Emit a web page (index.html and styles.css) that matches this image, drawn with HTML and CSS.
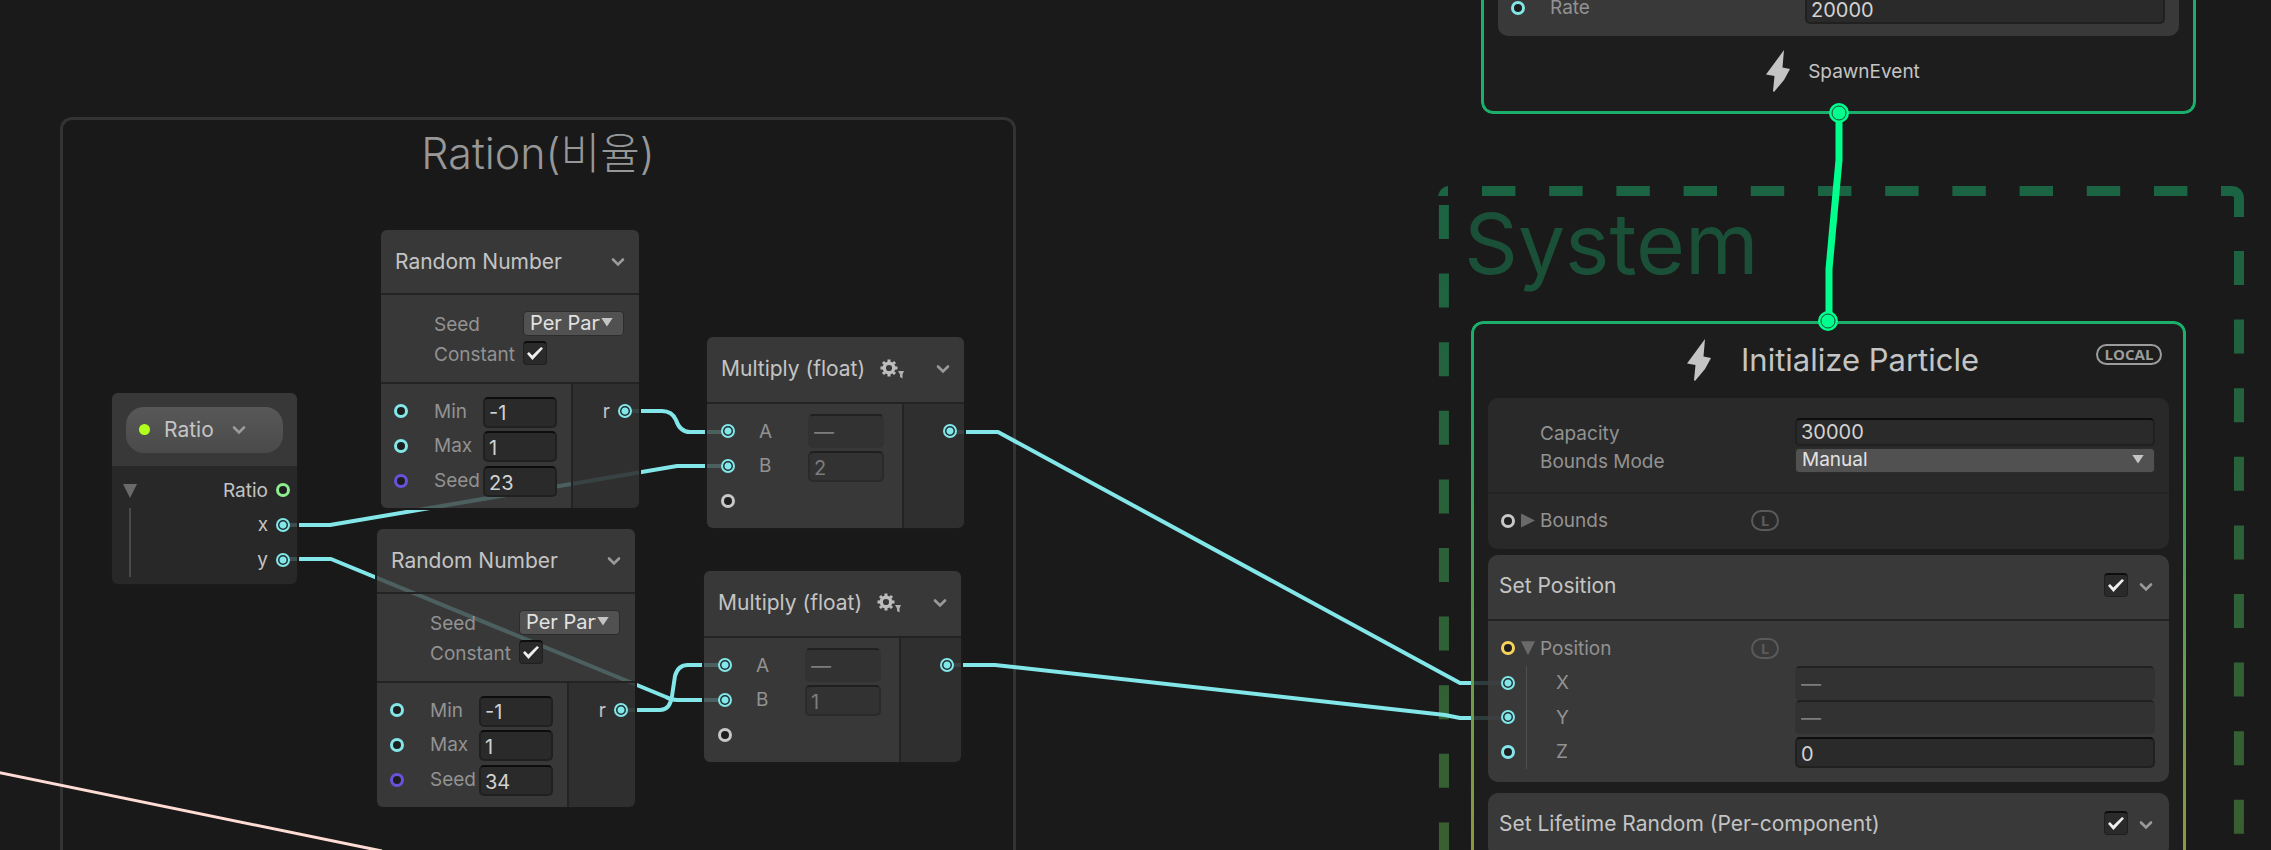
FILE: index.html
```html
<!DOCTYPE html>
<html lang="ko">
<head>
    <meta charset="UTF-8">
    <meta name="viewport" content="width=device-width, initial-scale=1.0">
    <title>VFX Graph</title>
    <link rel="stylesheet" href="styles.css">
</head>
<body>
    <svg class="symbols" aria-hidden="true">
        <symbol id="chevron" viewBox="0 0 14 10"><path d="M2 2.500L7 7.500L12 2.500" fill="none" stroke="#9a9a9a" stroke-width="2.600" stroke-linecap="round" /></symbol>
        <symbol id="bolt" viewBox="0 0 24 42"><path d="M18 0L16.500 17.500L24 19L18 30L8 42L7 41L8.500 26L0 24.500Z" fill="#c4c4c4" /></symbol>
        <symbol id="gear" viewBox="0 0 26 20">
            <circle cx="9" cy="9" r="4.800" fill="none" stroke="#bdbdbd" stroke-width="3.400" />
            <path d="M9 0.500V3M9 15V17.500M0.500 9H3M15 9H17.500M3 3L4.800 4.800M13.200 13.200L15 15M3 15L4.800 13.200M13.200 4.800L15 3" stroke="#bdbdbd" stroke-width="3" />
            <path d="M18 12H24L22.500 15.500V19.500L20 18V15.500Z" fill="#b0b0b0" />
        </symbol>
    </svg>
    <main class="graph">
        <!-- group and system frames -->
        <section class="group"><h2>Ration(비율)</h2></section>
        <h1 class="system-title">System</h1>

        <!-- edges -->
        <svg class="wires" width="2271" height="850">
            <defs>
                <linearGradient id="dashColor" gradientUnits="userSpaceOnUse" x1="0" y1="186" x2="0" y2="850">
                    <stop offset="0" stop-color="#1a6443" />
                    <stop offset="1" stop-color="#3a5f30" />
                </linearGradient>
            </defs>
            <g fill="none" stroke="url(#dashColor)" stroke-width="10">
                <path d="M1482 190.900L2190 191" stroke-dasharray="33.400 33.800" />
                <path d="M1443.900 205L1444 850" stroke-dasharray="34 34.600" />
                <path d="M2239 251L2238.900 850" stroke-dasharray="34 34.600" />
                <path d="M2221 191H2231Q2239 191 2239 199V217" />
            </g>
            <path d="M1438 196Q1440 187 1448 186V196Z" fill="#1a6443" />
            <g class="edge">
                <path d="M624 411H662Q672 411 676 420Q680 432 690 432H728" />
                <path d="M283 525H330L677 466H728" />
                <path d="M283 559H331L666 697Q671 700 677 700H725" />
                <path d="M621 710H660Q670 710 672 696L675 676Q678 665 688 665H725" />
                <path d="M950 432H998L1460 683H1508" />
                <path d="M946 665H995L1445 715L1460 718H1508" />
            </g>
            <path class="edge-pink" d="M-4 772L382 851" />
        </svg>

        <!-- nodes -->
        <article class="node ratio">
            <header>
                <button class="pill"><i class="dot"></i>Ratio<svg class="chevron"><use href="#chevron" /></svg></button>
            </header>
            <div class="outs">
                <div class="tree"><i class="tri down"></i></div>
                <div class="rows">
                    <div class="out">Ratio<i class="port green"></i></div>
                    <div class="out">x<i class="port on"></i></div>
                    <div class="out">y<i class="port on"></i></div>
                </div>
            </div>
        </article>

        <article class="node random random-1">
            <header><h3>Random Number</h3><button class="fold" aria-label="collapse"><svg class="chevron"><use href="#chevron" /></svg></button></header>
            <div class="options">
                <label for="seedMode1">Seed</label>
                <span class="drop"><select id="seedMode1"><option>Per Particle</option></select></span>
                <label for="const1">Constant</label>
                <input type="checkbox" id="const1" checked>
            </div>
            <div class="ports">
                <div class="rows ins">
                    <div class="in"><i class="port"></i><label for="min1">Min</label><input type="text" id="min1" value="-1"></div>
                    <div class="in"><i class="port"></i><label for="max1">Max</label><input type="text" id="max1" value="1"></div>
                    <div class="in"><i class="port purple"></i><label for="seed1">Seed</label><input type="text" id="seed1" value="23"></div>
                </div>
                <div class="rows side"><div class="out">r<i class="port on"></i></div></div>
            </div>
        </article>

        <article class="node random random-2">
            <header><h3>Random Number</h3><button class="fold" aria-label="collapse"><svg class="chevron"><use href="#chevron" /></svg></button></header>
            <div class="options">
                <label for="seedMode2">Seed</label>
                <span class="drop"><select id="seedMode2"><option>Per Particle</option></select></span>
                <label for="const2">Constant</label>
                <input type="checkbox" id="const2" checked>
            </div>
            <div class="ports">
                <div class="rows ins">
                    <div class="in"><i class="port"></i><label for="min2">Min</label><input type="text" id="min2" value="-1"></div>
                    <div class="in"><i class="port"></i><label for="max2">Max</label><input type="text" id="max2" value="1"></div>
                    <div class="in"><i class="port purple"></i><label for="seed2">Seed</label><input type="text" id="seed2" value="34"></div>
                </div>
                <div class="rows side"><div class="out">r<i class="port on"></i></div></div>
            </div>
        </article>

        <article class="node multiply multiply-1">
            <header><h3>Multiply (float)</h3><button class="fold" aria-label="settings"><svg class="gear"><use href="#gear" /></svg></button><button class="fold end" aria-label="collapse"><svg class="chevron"><use href="#chevron" /></svg></button></header>
            <div class="ports">
                <div class="rows ins">
                    <div class="in"><i class="port on"></i><label for="a1">A</label><input type="text" id="a1" class="linked" value="—" disabled></div>
                    <div class="in"><i class="port on"></i><label for="b1">B</label><input type="text" id="b1" value="2" disabled></div>
                    <div class="in"><i class="port white"></i></div>
                </div>
                <div class="rows side"><div class="out"><i class="port on"></i></div></div>
            </div>
        </article>

        <article class="node multiply multiply-2">
            <header><h3>Multiply (float)</h3><button class="fold" aria-label="settings"><svg class="gear"><use href="#gear" /></svg></button><button class="fold end" aria-label="collapse"><svg class="chevron"><use href="#chevron" /></svg></button></header>
            <div class="ports">
                <div class="rows ins">
                    <div class="in"><i class="port on"></i><label for="a2">A</label><input type="text" id="a2" class="linked" value="—" disabled></div>
                    <div class="in"><i class="port on"></i><label for="b2">B</label><input type="text" id="b2" value="1" disabled></div>
                    <div class="in"><i class="port white"></i></div>
                </div>
                <div class="rows side"><div class="out"><i class="port on"></i></div></div>
            </div>
        </article>

        <!-- contexts -->
        <article class="context spawn">
            <div class="block">
                <div class="slot"><i class="port"></i><label for="rate">Rate</label><input type="text" id="rate" value="20000"></div>
            </div>
            <footer><svg class="bolt"><use href="#bolt" /></svg>SpawnEvent</footer>
        </article>

        <article class="context init">
            <header>
                <h2><svg class="bolt"><use href="#bolt" /></svg>Initialize Particle</h2>
                <span class="badge local">LOCAL</span>
            </header>
            <div class="block settings">
                <div class="slot-group first">
                    <div class="slot"><label for="capacity">Capacity</label><input type="text" id="capacity" value="30000"></div>
                    <div class="slot"><label for="boundsMode">Bounds Mode</label><span class="drop wide"><select id="boundsMode"><option>Manual</option></select></span></div>
                </div>
                <div class="slot-group">
                    <div class="slot"><i class="port white"></i><i class="tri right"></i><span class="name">Bounds</span><span class="badge space">L</span></div>
                </div>
            </div>
            <div class="block">
                <header><h3>Set Position</h3><input type="checkbox" aria-label="Set Position" checked><button class="fold" aria-label="collapse"><svg class="chevron"><use href="#chevron" /></svg></button></header>
                <div class="slots">
                    <div class="slot"><i class="port yellow"></i><i class="tri down"></i><span class="name">Position</span><span class="badge space">L</span></div>
                    <div class="slot child"><i class="port on"></i><label for="posX">X</label><input type="text" id="posX" class="linked" value="—" disabled></div>
                    <div class="slot child"><i class="port on"></i><label for="posY">Y</label><input type="text" id="posY" class="linked" value="—" disabled></div>
                    <div class="slot child"><i class="port"></i><label for="posZ">Z</label><input type="text" id="posZ" value="0"></div>
                </div>
            </div>
            <div class="block">
                <header><h3>Set Lifetime Random (Per-component)</h3><input type="checkbox" aria-label="Set Lifetime Random" checked><button class="fold" aria-label="collapse"><svg class="chevron"><use href="#chevron" /></svg></button></header>
            </div>
        </article>

        <!-- flow edge lies over the contexts -->
        <svg class="wires" width="2271" height="850">
            <path d="M1839 113V160L1829 269V321" fill="none" stroke="#00ff8c" stroke-width="7" />
            <g fill="#00ff8c">
                <circle cx="1839" cy="113" r="10" />
                <circle cx="1828" cy="321" r="10" />
            </g>
            <g fill="none" stroke="#1c4a36" stroke-width="1">
                <circle cx="1839" cy="113" r="7" />
                <circle cx="1828" cy="321" r="7" />
            </g>
        </svg>
    </main>
</body>
</html>
```
FILE: styles.css
```css
* { box-sizing: border-box; }
body {
    margin: 0;
    background: #1a1a1a;
    color: #c4c4c4;
    font-family: Inter, "Noto Sans CJK KR", sans-serif;
    font-size: 19px;
}
h1, h2, h3 { margin: 0; font-weight: 400; }
h3 { font-size: 21px; }
i { display: block; }
button {
    padding: 0;
    border: 0;
    background: none;
    color: inherit;
    font: inherit;
}
.symbols { position: absolute; width: 0; height: 0; }
.graph {
    position: relative;
    height: 100vh;
    overflow: hidden;
}
.wires {
    position: absolute;
    left: 0;
    top: 0;
    pointer-events: none;
}
.edge { fill: none; stroke: #83e6e8; stroke-width: 4; stroke-linejoin: round; }
.edge-pink { fill: none; stroke: #ffdcd4; stroke-width: 3; }

/* frames */
.group {
    position: absolute;
    left: 60px;
    top: 117px;
    width: 956px;
    height: 800px;
    border: 3px solid #333;
    border-radius: 12px;
    background: #191919;
}
.group h2 {
    padding-top: 9px;
    text-align: center;
    font-size: 43px;
    font-weight: 300;
    line-height: 48px;
    color: #979797;
}
.system-title {
    position: absolute;
    left: 1464px;
    top: 192px;
    font-size: 84px;
    line-height: 104px;
    color: #1b5038;
}

/* small parts */
.port {
    width: 14px;
    height: 14px;
    border: 3px solid #83e6e8;
    border-radius: 50%;
    background: #1e1e1e;
}
.port.on { border-width: 2px; background: radial-gradient(circle, #83e6e8 3px, #1e3032 4px); }
.port.purple { border-color: #6b52dc; }
.port.green { border-color: #8fec8f; }
.port.white { border-color: #c8c8c8; }
.port.yellow { border-color: #f7d25c; }
.tri { width: 14px; height: 14px; background: #6a6a6a; }
.tri.down { clip-path: polygon(0 0, 100% 0, 50% 100%); }
.tri.right { clip-path: polygon(0 0, 100% 50%, 0 100%); }
.chevron { display: block; width: 14px; height: 10px; }
.gear { display: block; width: 26px; height: 20px; }
.bolt { width: 24px; height: 42px; }
.badge {
    border: 2px solid #9c9c9c;
    border-radius: 12px;
    height: 21px;
    color: #9c9c9c;
    font-family: "Open Sans", sans-serif;
    font-weight: 700;
    font-size: 15px;
    line-height: 17px;
    text-align: center;
}
.local { width: 66px; }
.space { width: 28px; border-color: #5a5a5a; color: #5a5a5a; }
input[type="text"] {
    width: 100%;
    height: 31px;
    margin: 2px 0 0;
    padding: 2px 4px 0;
    border: 2px solid #202020;
    border-top-color: #0d0d0d;
    border-radius: 5px;
    background: #2a2a2a;
    color: #d2d2d2;
    font: inherit;
    font-size: 20px;
}
input[type="text"]:disabled { border-color: #2a2a2a; border-top-color: #1f1f1f; background: #323232; color: #7c7c7c; }
input[type="text"].linked { height: 34px; margin: 0; border-color: #323232; border-top-color: #212121; }
input[type="checkbox"] {
    appearance: none;
    width: 24px;
    height: 24px;
    margin: 0;
    border: 1px solid #1f1f1f;
    border-top: 2px solid #0d0d0d;
    border-radius: 4px;
    background: #2a2a2a;
}
input[type="checkbox"]:checked::before {
    content: "";
    display: block;
    width: 16px;
    height: 13px;
    margin: 4px 3px;
    background: #eee;
    clip-path: polygon(0 52%, 12% 38%, 33% 66%, 88% 0, 100% 12%, 34% 100%);
}
.drop { position: relative; display: block; }
.drop::after {
    content: "";
    position: absolute;
    right: 11px;
    top: 7px;
    width: 12px;
    height: 9px;
    background: #c4c4c4;
    clip-path: polygon(0 0, 100% 0, 50% 100%);
}
.drop select {
    appearance: none;
    display: block;
    width: 100%;
    height: 25px;
    padding: 0 24px 0 6px;
    border: 1px solid #2c2c2c;
    border-radius: 4px;
    background: #515151;
    color: #e2e2e2;
    font: inherit;
    font-size: 20px;
    line-height: 22px;
}
.drop.wide select { font-size: 19px; }

/* operator nodes */
.node {
    position: absolute;
    border-radius: 6px;
    box-shadow: 0 0 0 2px #1a1a1a;
    overflow: hidden;
}
.node header {
    display: flex;
    align-items: center;
    padding: 0 14px;
    background: rgba(64, 64, 64, .81);
}
.random { width: 258px; }
.random header { height: 63px; justify-content: space-between; }
.random-1 { left: 381px; top: 230px; }
.random-2 { left: 377px; top: 529px; }
.multiply { width: 257px; }
.multiply header { height: 65px; gap: 15px; padding-bottom: 2px; }
.multiply .end { margin-left: auto; }
.multiply-1 { left: 707px; top: 337px; }
.multiply-2 { left: 704px; top: 571px; }
.options {
    display: grid;
    grid-template-columns: 89px auto;
    grid-auto-rows: 30px;
    align-items: center;
    padding: 13px 15px 14px 53px;
    border-top: 2px solid #232323;
    background: rgba(64, 64, 64, .81);
    color: #929292;
}
.options label { padding-top: 2px; }
.options select { padding-right: 23px; }
.ports {
    display: flex;
    border-top: 2px solid #232323;
}
.rows {
    display: grid;
    grid-template-rows: repeat(3, 1fr);
    height: 124px;
    padding: 10px 0;
}
.ins {
    flex: 1;
    background: rgba(64, 64, 64, .81);
    color: #929292;
}
.side {
    width: 68px;
    padding-right: 7px;
    border-left: 2px solid #232323;
    background: rgba(50, 50, 50, .91);
}
.in {
    display: grid;
    grid-template-columns: 40px 49px 74px;
    align-items: center;
    padding-left: 13px;
}
.multiply .in { grid-template-columns: 38px 49px 76px; padding-left: 14px; }
.multiply .side { width: 62px; }
.out {
    display: flex;
    align-items: center;
    justify-content: flex-end;
    gap: 8px;
}
.ratio {
    left: 112px;
    top: 393px;
    width: 185px;
}
.ratio header { height: 73px; }
.pill {
    display: flex;
    align-items: center;
    width: 157px;
    height: 46px;
    padding-left: 13px;
    border-radius: 18px;
    background: linear-gradient(#585858, #4a4a4a);
    font-size: 21px;
}
.dot {
    width: 11px;
    height: 11px;
    margin-right: 14px;
    border-radius: 50%;
    background: #b2ff1e;
}
.pill .chevron { margin-left: 18px; }
.outs {
    display: flex;
    justify-content: space-between;
    background: rgba(44, 44, 44, .82);
}
.outs .rows { height: 118px; padding: 7px 7px 7px 0; }
.tree {
    padding: 18px 0 0 11px;
}
.tree::after {
    content: "";
    display: block;
    width: 2px;
    height: 69px;
    margin: 10px 6px 0;
    background: #4a4a4a;
}

/* contexts */
.context {
    position: absolute;
    width: 715px;
    padding: 0 17px;
    border-radius: 12px;
    background: rgba(30, 30, 30, .85);
}
.context::before {
    content: "";
    position: absolute;
    inset: 0;
    padding: 3px;
    border-radius: 12px;
    background: #1cae6b;
    mask: linear-gradient(#000 0 0) content-box exclude, linear-gradient(#000 0 0);
    pointer-events: none;
}
.spawn { left: 1481px; top: -60px; padding-top: 20px; }
.init { left: 1471px; top: 321px; height: 640px; }
.init::before { background: linear-gradient(#1cae6b 10%, #46a356 33%, #8f983a 83%); }
.spawn footer {
    display: flex;
    align-items: center;
    justify-content: center;
    gap: 18px;
    height: 78px;
    padding: 0 0 8px 9px;
}
.init > header {
    display: grid;
    grid-template-columns: 1fr auto 1fr;
    align-items: center;
    height: 77px;
    padding: 0 7px;
}
.init h2 {
    display: flex;
    align-items: center;
    gap: 30px;
    grid-column: 2;
    padding-left: 9px;
    font-size: 31px;
}
.local { justify-self: end; margin-bottom: 10px; }
.block {
    margin-bottom: 11px;
    border-radius: 10px;
    background: rgba(64, 64, 64, .81);
}
.spawn .block { margin: 0; padding: 31px 0 12px; }
.settings { margin-bottom: 6px; background: #292929; }
.block header {
    display: flex;
    align-items: center;
    gap: 11px;
    height: 64px;
    padding: 0 16px 4px 11px;
}
.block h3 { flex: 1; }
.block .fold { padding-top: 4px; }
.slot {
    display: grid;
    grid-template-columns: 20px 19px 211px 44px 1fr;
    align-items: center;
    padding: 0 14px 0 13px;
    color: #929292;
}
.slot label, .slot .name { grid-column: 3; }
.slot input, .slot .drop { grid-column: 5; }
.slot-group { padding: 15px 0 17px; border-top: 2px solid #242424; }
.slot-group.first { padding: 20px 0 18px; border: 0; }
.first .slot { height: 28px; }
.first .slot label { padding-top: 3px; }
.first .slot input { height: 28px; margin: 0; padding: 0 4px; }
.slots {
    display: grid;
    grid-template-rows: repeat(4, 1fr);
    height: 163px;
    padding: 10px 0 13px;
    border-top: 2px solid #232323;
}
.child label { padding-left: 16px; }
.child::before {
    content: "";
    grid-area: 1 / 2;
    width: 1px;
    height: 100%;
    margin-left: 5px;
    background: #505050;
}
.child .port, .child label, .child input { grid-row: 1; }
```
